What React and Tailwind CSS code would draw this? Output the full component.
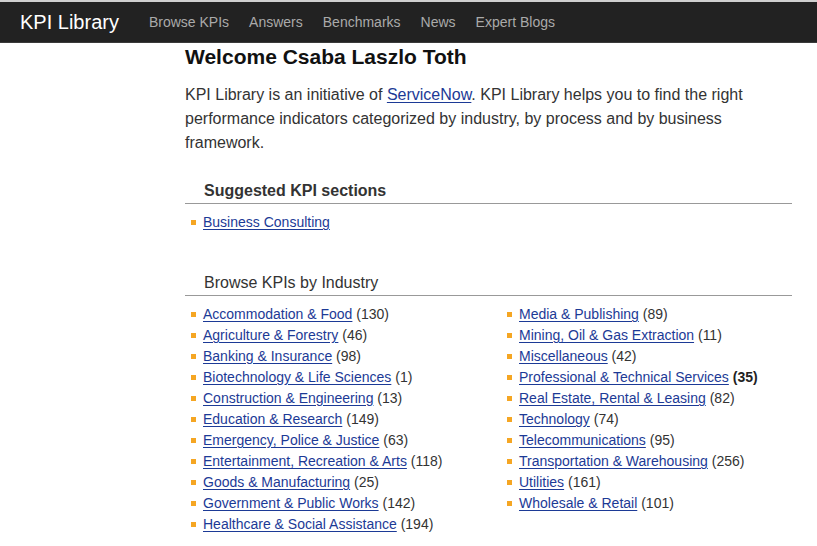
const navLinks = ['Browse KPIs', 'Answers', 'Benchmarks', 'News', 'Expert Blogs']

const leftIndustries = [
  ['Accommodation & Food', '130'],
  ['Agriculture & Forestry', '46'],
  ['Banking & Insurance', '98'],
  ['Biotechnology & Life Sciences', '1'],
  ['Construction & Engineering', '13'],
  ['Education & Research', '149'],
  ['Emergency, Police & Justice', '63'],
  ['Entertainment, Recreation & Arts', '118'],
  ['Goods & Manufacturing', '25'],
  ['Government & Public Works', '142'],
  ['Healthcare & Social Assistance', '194'],
]

const rightIndustries = [
  ['Media & Publishing', '89'],
  ['Mining, Oil & Gas Extraction', '11'],
  ['Miscellaneous', '42'],
  ['Professional & Technical Services', '35', true],
  ['Real Estate, Rental & Leasing', '82'],
  ['Technology', '74'],
  ['Telecommunications', '95'],
  ['Transportation & Warehousing', '256'],
  ['Utilities', '161'],
  ['Wholesale & Retail', '101'],
]

function Bullet() {
  return <span className="mr-[7px] mt-[8px] inline-block h-[5px] w-[5px] shrink-0 bg-[#f5a623]" />
}

function IndustryList({ items }) {
  return (
    <ul>
      {items.map(([name, count, bold]) => (
        <li key={name} className="flex h-[21px] items-start pl-[6px] leading-[20px]">
          <Bullet />
          <span>
            <a href="#" className="text-[#1c3a96] underline underline-offset-2">
              {name}
            </a>{' '}
            <span className={bold ? 'font-bold text-[#222]' : ''}>({count})</span>
          </span>
        </li>
      ))}
    </ul>
  )
}

export default function App() {
  return (
    <div className="min-h-[546px] bg-white font-['Liberation_Sans',Arial,sans-serif] text-[#333]">
      <div className="h-[2px] bg-[#cfcfcf]" />
      <div className="flex h-[41px] items-center border-b border-[#3a3a3a] bg-[#222]">
        <div className="pl-[20px] pr-[30px] text-[20px] text-white">KPI Library</div>
        <div className="flex gap-[20px] text-[14px] text-[#aaa]">
          {navLinks.map((l) => (
            <a key={l} href="#">
              {l}
            </a>
          ))}
        </div>
      </div>

      <div className="ml-[185px] w-[607px]">
        <h1 className="text-[21px] font-bold leading-[28px] text-[#111]">Welcome Csaba Laszlo Toth</h1>
        <p className="mt-[12px] text-[16px] leading-[24px]">
          KPI Library is an initiative of{' '}
          <a href="#" className="text-[#1c3a96] underline underline-offset-2">
            ServiceNow
          </a>
          . KPI Library helps you to find the right performance indicators categorized by industry, by process and by
          business framework.
        </p>

        <h2 className="mt-[25px] border-b border-[#999] pb-[1px] pl-[19px] text-[16px] font-bold leading-[22px]">
          Suggested KPI sections
        </h2>
        <ul className="mt-[8px] text-[14px] text-[#333]">
          <li className="flex h-[21px] items-start pl-[6px] leading-[20px]">
            <Bullet />
            <a href="#" className="text-[#1c3a96] underline underline-offset-2">
              Business Consulting
            </a>
          </li>
        </ul>

        <h2 className="mt-[39px] border-b border-[#999] pb-[1px] pl-[19px] text-[16px] leading-[22px]">
          Browse KPIs by Industry
        </h2>
        <div className="mt-[8px] grid grid-cols-[316px_1fr] text-[14px]">
          <IndustryList items={leftIndustries} />
          <IndustryList items={rightIndustries} />
        </div>
      </div>
    </div>
  )
}
